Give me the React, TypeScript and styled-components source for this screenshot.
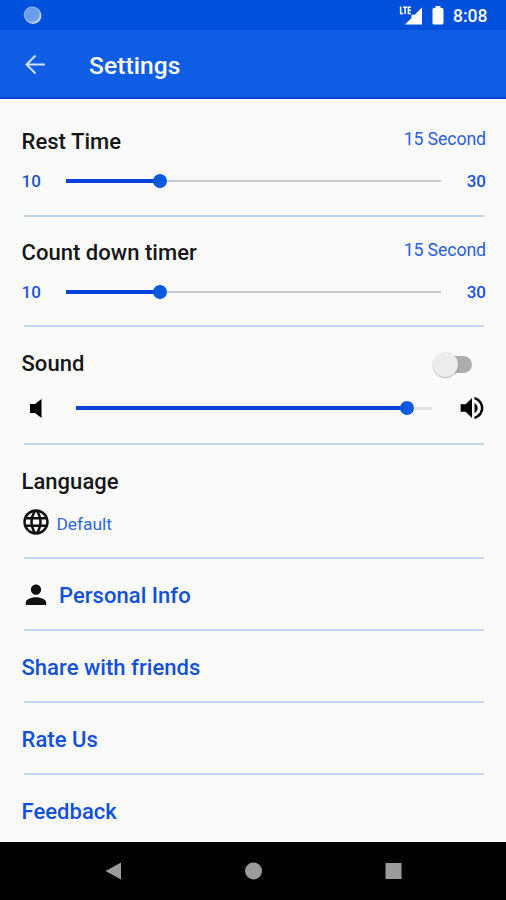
import React from "react";
import styled, { createGlobalStyle } from "styled-components";

const Global = createGlobalStyle`
  * { box-sizing: border-box; }
  body { margin: 0; background: #fafafa; font-family: Roboto, "Liberation Sans", sans-serif; }
`;

const Screen = styled.div`
  width: 506px;
  height: 900px;
  display: flex;
  flex-direction: column;
  overflow: hidden;
  background: #fafafa;
`;

const StatusBar = styled.header`
  height: 30px;
  padding: 0 18px 0 23px;
  display: flex;
  align-items: center;
  justify-content: space-between;
  background: #0050db;
  color: #fff;
`;

const StatusIcons = styled.div`
  display: flex;
  align-items: center;
`;

const Clock = styled.span`
  width: 35px;
  margin-left: 8px;
  padding-top: 2px;
  font-size: 17.5px;
  line-height: 20px;
  font-weight: 500;
  white-space: nowrap;
`;

const AppBar = styled.div`
  height: 69px;
  padding: 2px 24px 0;
  display: flex;
  align-items: center;
  gap: 43px;
  background: #105de5;
  border-bottom: 2px solid #0344cf;
`;

const PageTitle = styled.h1`
  margin: 2px 0 0;
  color: #fff;
  font-size: 24.5px;
  line-height: 30px;
  font-weight: 500;
  letter-spacing: 0.1px;
`;

const Content = styled.main`
  flex: 1;
  padding: 0 20px 0 21.5px;
  display: flex;
  flex-direction: column;
`;

const Section = styled.section<{ $height: number; $top: number }>`
  height: ${(p) => p.$height}px;
  padding-top: ${(p) => p.$top}px;
  display: flex;
  flex-direction: column;
  flex-shrink: 0;
`;

const Divider = styled.hr`
  width: 460px;
  height: 2px;
  margin: auto 0 0 2px;
  border: 0;
  background: #c0d8ef;
`;

const TitleRow = styled.div`
  height: 28px;
  display: flex;
  align-items: center;
  justify-content: space-between;
`;

const Heading = styled.h2<{ $link?: boolean }>`
  margin: 0;
  color: ${(p) => (p.$link ? "#1150d8" : "#161616")};
  font-size: 22px;
  line-height: 28px;
  font-weight: 500;
  letter-spacing: 0.04px;
  white-space: nowrap;
`;

const Value = styled.span`
  margin-top: -7px;
  color: #2a60dc;
  font-size: 17.8px;
  line-height: 22px;
  letter-spacing: -0.15px;
`;

const SliderRow = styled.div<{ $top?: number }>`
  height: 24px;
  margin-top: ${(p) => p.$top ?? 13}px;
  display: flex;
  align-items: center;
`;

const Bound = styled.span<{ $end?: boolean }>`
  width: ${(p) => (p.$end ? 45 : 44.5)}px;
  color: #1f52dc;
  font-size: 17px;
  line-height: 20px;
  font-weight: 500;
  text-align: ${(p) => (p.$end ? "right" : "left")};
`;

const Track = styled.div<{ $thick?: boolean }>`
  flex: 1;
  height: 14px;
  display: flex;
  align-items: center;
  &::after {
    content: "";
    flex: 1;
    height: ${(p) => (p.$thick ? 3 : 2)}px;
    background: ${(p) => (p.$thick ? "#e0e1e3" : "#c9c9c9")};
  }
`;

const Fill = styled.div<{ $width: number }>`
  width: ${(p) => p.$width}px;
  height: 4px;
  background: #0644d9;
`;

const Thumb = styled.div`
  width: 14px;
  height: 14px;
  margin-left: -7px;
  border-radius: 50%;
  background: #0b59df;
`;

const Switch = styled.div`
  width: 39px;
  height: 26px;
  margin: 1px 14px 0 0;
  display: flex;
  align-items: center;
  &::after {
    content: "";
    width: 27px;
    height: 17px;
    margin-left: -13px;
    border-radius: 9px;
    background: #adadad;
  }
`;

const SwitchKnob = styled.div`
  width: 25px;
  height: 25px;
  flex-shrink: 0;
  border-radius: 50%;
  background: #ececec;
  box-shadow: 0 1px 1.5px rgba(0, 0, 0, 0.28);
  z-index: 1;
`;

const IconSlot = styled.div<{ $width: number; $pad: number }>`
  width: ${(p) => p.$width}px;
  padding-left: ${(p) => p.$pad}px;
  display: flex;
  align-items: center;
`;

const LanguageRow = styled.div`
  height: 28px;
  margin-top: 12px;
  display: flex;
  align-items: center;
`;

const LanguageValue = styled.span`
  margin: 4px 0 0 7px;
  color: #3068dc;
  font-size: 17.4px;
  line-height: 20px;
  letter-spacing: -0.05px;
`;

const IconHeading = styled.div`
  height: 28px;
  display: flex;
  align-items: center;
  gap: 9.5px;
`;

const NavBar = styled.nav`
  height: 58px;
  padding: 0 104px 1px 105px;
  display: flex;
  align-items: center;
  justify-content: space-between;
  background: #000;
`;

const Icon = styled.svg`
  display: block;
  flex-shrink: 0;
`;

function RangeSetting({ title, height, top }: { title: string; height: number; top: number }) {
  return (
    <Section $height={height} $top={top}>
      <TitleRow>
        <Heading>{title}</Heading>
        <Value>15 Second</Value>
      </TitleRow>
      <SliderRow>
        <Bound>10</Bound>
        <Track>
          <Fill $width={94} />
          <Thumb />
        </Track>
        <Bound $end>30</Bound>
      </SliderRow>
      <Divider />
    </Section>
  );
}

export default function App() {
  return (
    <>
      <Global />
      <Screen>
        <StatusBar>
          <Icon width="19" height="20" viewBox="0 0 19 20">
            <circle cx="10" cy="10.5" r="8.4" fill="#c7dcfb" />
            <circle cx="9" cy="9.5" r="7.6" fill="#6d9df0" />
            <circle cx="9" cy="9.7" r="7.8" fill="none" stroke="#8fb5f4" strokeWidth="1" />
          </Icon>
          <StatusIcons>
            <Icon width="46" height="20" viewBox="0 0 46 20" fill="#fff">
              <path d="M23 2.5V19.5H6L12.5 13V9.8H15.7Z" />
              <path d="M1.6 1.6V8.6H4.2M4 2.3H8.2M6.1 2.3V9M12 2.3H9.4V8.4H12M9.4 5.3H11.8" fill="none" stroke="#fff" strokeWidth="1.5" />
              <path d="M36.5 1H41.5V3H44V4L44.5 4.5V18L43.5 19.5H34.5L33.5 18.5V4L34.5 3H36.5Z" />
            </Icon>
            <Clock>8:08</Clock>
          </StatusIcons>
        </StatusBar>
        <AppBar>
          <Icon width="22" height="22" viewBox="0 0 22 22" fill="none" stroke="#cfe0fb" strokeWidth="2">
            <path d="M21 10.5H3M11.5 1.5L2.5 10.5L11.5 19.5" />
          </Icon>
          <PageTitle>Settings</PageTitle>
        </AppBar>
        <Content>
          <RangeSetting title="Rest Time" height={118} top={29} />
          <RangeSetting title="Count down timer" height={110} top={22} />
          <Section $height={118} $top={23}>
            <TitleRow>
              <Heading>Sound</Heading>
              <Switch>
                <SwitchKnob />
              </Switch>
            </TitleRow>
            <SliderRow $top={18}>
              <IconSlot $width={54.5} $pad={8.5}>
                <Icon width="12" height="19" viewBox="0 0 12 19">
                  <path d="M0 5H5L11.5 0V19L5 14H0Z" fill="#000" />
                </Icon>
              </IconSlot>
              <Track $thick>
                <Fill $width={331} />
                <Thumb />
              </Track>
              <IconSlot $width={54} $pad={27.5}>
                <Icon width="24" height="24" viewBox="2.5 2.5 19 19">
                  <path d="M3 9v6h4l5 5V4L7 9H3zm13.5 3c0-1.77-1.02-3.29-2.5-4.03v8.05c1.48-.73 2.5-2.25 2.5-4.02zM14 3.23v2.06c2.89.86 5 3.54 5 6.71s-2.11 5.85-5 6.71v2.06c4.01-.91 7-4.49 7-8.77s-2.99-7.86-7-8.77z" fill="#000" />
                </Icon>
              </IconSlot>
            </SliderRow>
            <Divider />
          </Section>
          <Section $height={114} $top={23}>
            <TitleRow>
              <Heading>Language</Heading>
            </TitleRow>
            <LanguageRow>
              <Icon width="28" height="28" viewBox="1 1 22 22">
                <path d="M11.99 2C6.47 2 2 6.48 2 12s4.47 10 9.99 10C17.52 22 22 17.52 22 12S17.52 2 11.99 2zm6.93 6h-2.95c-.32-1.25-.78-2.45-1.38-3.56 1.84.63 3.37 1.91 4.33 3.56zM12 4.04c.83 1.2 1.48 2.53 1.91 3.96h-3.82c.43-1.43 1.08-2.76 1.91-3.96zM4.26 14C4.1 13.36 4 12.69 4 12s.1-1.36.26-2h3.38c-.08.66-.14 1.32-.14 2s.06 1.34.14 2H4.26zm.82 2h2.95c.32 1.25.78 2.45 1.38 3.56-1.84-.63-3.37-1.9-4.33-3.56zm2.95-8H5.08c.96-1.66 2.49-2.93 4.33-3.56C8.81 5.55 8.35 6.75 8.03 8zM12 19.96c-.83-1.2-1.48-2.53-1.91-3.96h3.82c-.43 1.43-1.08 2.76-1.91 3.96zM14.34 14H9.66c-.09-.66-.16-1.32-.16-2s.07-1.35.16-2h4.68c.09.65.16 1.32.16 2s-.07 1.34-.16 2zm.25 5.56c.6-1.11 1.06-2.31 1.38-3.56h2.95c-.96 1.65-2.49 2.93-4.33 3.56zM16.36 14c.08-.66.14-1.32.14-2s-.06-1.34-.14-2h3.38c.16.64.26 1.31.26 2s-.1 1.36-.26 2h-3.38z" fill="#111" />
              </Icon>
              <LanguageValue>Default</LanguageValue>
            </LanguageRow>
            <Divider />
          </Section>
          <Section $height={72} $top={23}>
            <IconHeading>
              <Icon width="28" height="28" viewBox="1 2 22 22">
                <path d="M12 12c2.21 0 4-1.79 4-4s-1.79-4-4-4-4 1.79-4 4 1.79 4 4 4zm0 2c-2.67 0-8 1.34-8 4v2h16v-2c0-2.66-5.33-4-8-4z" fill="#111" />
              </Icon>
              <Heading $link>Personal Info</Heading>
            </IconHeading>
            <Divider />
          </Section>
          <Section $height={72} $top={23}>
            <Heading $link>Share with friends</Heading>
            <Divider />
          </Section>
          <Section $height={72} $top={23}>
            <Heading $link>Rate Us</Heading>
            <Divider />
          </Section>
          <Section $height={67} $top={23}>
            <Heading $link>Feedback</Heading>
          </Section>
        </Content>
        <NavBar>
          <Icon width="17" height="18" viewBox="0 0 17 18">
            <path d="M0.5 9L16 0.5V17.5Z" fill="#9b9b9b" />
          </Icon>
          <Icon width="18" height="18" viewBox="0 0 18 18">
            <circle cx="8.5" cy="9" r="8.5" fill="#9b9b9b" />
          </Icon>
          <Icon width="17" height="17" viewBox="0 0 17 17">
            <rect x="0.5" y="1" width="16" height="16" fill="#9b9b9b" />
          </Icon>
        </NavBar>
      </Screen>
    </>
  );
}
